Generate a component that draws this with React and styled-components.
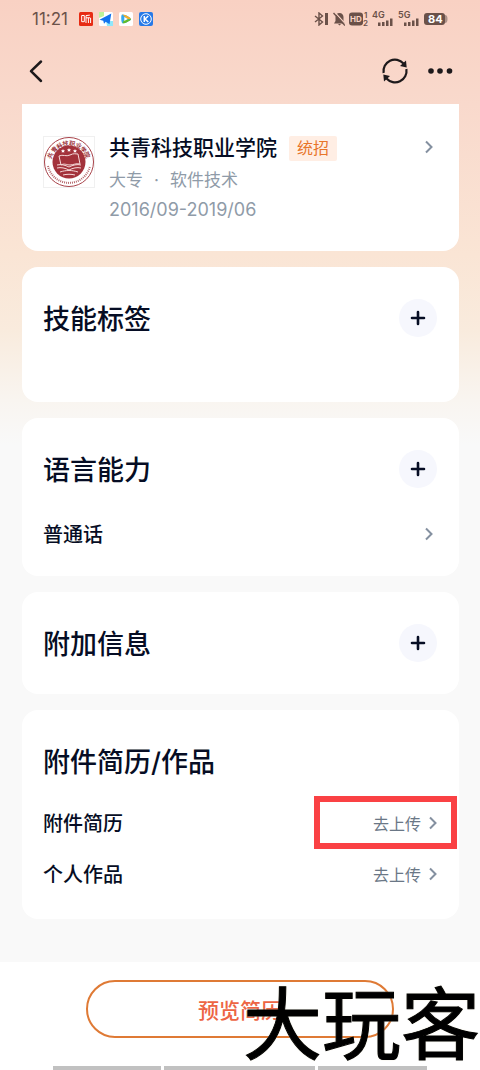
import React from "react";
import styled, { createGlobalStyle } from "styled-components";

const Global = createGlobalStyle`
  * { box-sizing: border-box; }
  body { margin: 0; background: #f9f9f9; }
  button { font-family: inherit; padding: 0; cursor: pointer; }
  svg { display: block; }
`;

const Page = styled.div`
  min-height: 100vh;
  display: flex;
  flex-direction: column;
  font-family: Inter, "Noto Sans CJK SC", sans-serif;
  color: #060d24;
  background: linear-gradient(#f9d1c3 0px, #f9d9cc 104px, #fae5d5 255px, #f9ebdd 330px, #f9f5f0 400px, #f9f9f9 445px);
`;

const StatusBar = styled.div`
  height: 38px;
  padding: 0 32px;
  display: flex;
  align-items: center;
  justify-content: space-between;
  color: #6b5149;
`;

const StatusGroup = styled.div`
  display: flex;
  align-items: center;
  gap: ${(p) => p.$gap}px;
`;

const Time = styled.span`
  font-size: 17px;
  line-height: 20px;
  margin-right: 5px;
`;

const NavBar = styled.nav`
  height: 66px;
  padding: 0 26px;
  display: flex;
  align-items: center;
  justify-content: space-between;
`;

const NavActions = styled.div`
  display: flex;
  align-items: center;
  gap: 17px;
`;

const IconButton = styled.button`
  border: 0;
  background: none;
  color: #1d191b;
`;

const Content = styled.main`
  padding: 0 21px 40px 22px;
  display: flex;
  flex-direction: column;
  gap: 16px;
`;

const Card = styled.section`
  background: #fff;
  border-radius: ${(p) => (p.$cut ? "0 0 16px 16px" : "16px")};
  padding: 32px 22px ${(p) => p.$bottom || 32}px 21px;
`;

const School = styled.div`
  display: flex;
  align-items: flex-start;
  gap: 14px;
`;

const SchoolInfo = styled.div`
  flex: 1;
  display: flex;
  flex-direction: column;
  color: #8f9ba8;
  font-size: 17px;
  line-height: 29px;
`;

const NameLine = styled.div`
  display: flex;
  align-items: center;
  gap: 12px;
  height: 24px;
  margin-bottom: 6px;
`;

const SchoolName = styled.h3`
  margin: 0;
  font-size: 21px;
  line-height: 24px;
  font-weight: 500;
  color: #060d24;
`;

const Tag = styled.span`
  padding: 0 8px;
  border-radius: 2px;
  background: #ffeee4;
  color: #e8752a;
  font-size: 16px;
  line-height: 25px;
`;

const Degree = styled.div`
  display: flex;
`;

const Dates = styled.div`
  font-size: 18px;
`;

const Dot = styled.span`
  width: 27px;
  text-align: center;
`;

const CardHead = styled.div`
  display: flex;
  align-items: center;
  justify-content: space-between;
`;

const Title = styled.h2`
  margin: 0;
  padding-top: 4px;
  font-size: 27px;
  line-height: 34px;
  font-weight: 500;
`;

const AddButton = styled.button`
  width: 38px;
  height: 38px;
  border: 0;
  border-radius: 50%;
  background: #f6f7fd;
  color: #060d24;
  display: grid;
  place-items: center;
`;

const Rows = styled.div`
  margin-top: ${(p) => p.$gap}px;
`;

const Row = styled.a`
  height: 51px;
  display: flex;
  align-items: center;
  justify-content: space-between;
  position: relative;
  color: inherit;
  text-decoration: none;
  font-size: 20px;
  font-weight: 500;
`;

const Action = styled.span`
  display: flex;
  align-items: center;
  gap: 8px;
  font-size: 16px;
  font-weight: 400;
  color: #6a7786;
`;

const Highlight = styled.span`
  position: absolute;
  top: -1px;
  right: -20px;
  width: 143px;
  height: 53px;
  border: 6px solid #fa4144;
`;

const ChevronBox = styled.span`
  display: flex;
  align-items: center;
  height: 22px;
  color: #8490a0;
  margin-right: ${(p) => p.$inset || 0}px;
`;

const Footer = styled.footer`
  margin-top: auto;
  position: relative;
  background: #fff;
  padding-top: 18px;
  display: flex;
  flex-direction: column;
  align-items: center;
  gap: 28px;
`;

const PreviewButton = styled.button`
  width: 64%;
  height: 58px;
  border: 2px solid #df7a35;
  border-radius: 29px;
  background: #fff;
  color: #ed6544;
  font-size: 21px;
  font-weight: 500;
`;

const SystemBar = styled.div`
  width: 78%;
  height: 4px;
  display: grid;
  grid-template-columns: 108fr 150fr 109fr;
  gap: 3px;
`;

const SystemKey = styled.span`
  background: #c1c1c1;
`;

const Watermark = styled.div`
  position: absolute;
  right: 0;
  bottom: 10px;
  font-family: "Noto Sans CJK SC", sans-serif;
  font-size: 79px;
  line-height: 80px;
  font-weight: 400;
  color: #000;
  -webkit-text-stroke: 1px #000;
  text-shadow: 0 0 2px #e5dfc0;
  white-space: nowrap;
  pointer-events: none;
`;

const Chevron = ({ inset }) => (
  <ChevronBox $inset={inset}>
    <svg width="8" height="14" viewBox="0 0 8 14" fill="none" stroke="currentColor" strokeWidth="2">
      <path d="M1 1.5 6.5 7 1 12.5" />
    </svg>
  </ChevronBox>
);

const Add = ({ label }) => (
  <AddButton aria-label={label}>
    <svg width="16" height="16" viewBox="0 0 16 16" stroke="currentColor" strokeWidth="2.6" strokeLinecap="round">
      <path d="M8 2v12M2 8h12" />
    </svg>
  </AddButton>
);

const AppIcons = () => (
  <>
    <svg width="14" height="14" viewBox="0 0 14 14">
      <rect width="14" height="14" rx="1.5" fill="#e72b13" />
      <path d="M2.7 3.5h2.6v6.2H2.7zM7 11V3.6l3.8-.5M7 5.8h4M9.4 5.8V11M11.6 5.8V11" fill="none" stroke="#fff" strokeWidth="1" />
    </svg>
    <svg width="14" height="14" viewBox="0 0 14 14">
      <rect width="14" height="14" rx="1.5" fill="#fff" />
      <path d="M0 0h5v4L0 6z" fill="#bdf29a" />
      <path d="M7 9h7v5H8z" fill="#8fe7fb" />
      <path d="M.5 7.8 12.3 1.4 10.5 12.3 6.8 9.7 5 11.8 4.3 8.7z" fill="#1373ee" />
    </svg>
    <svg width="14" height="14" viewBox="0 0 14 14">
      <rect width="14" height="14" rx="1.5" fill="#fff" />
      <path d="M3 2.5c2-.7 9 2.7 9 4.5S5 11.8 3.5 11.3 1.8 3.2 3 2.5z" fill="#35a9ee" />
      <path d="M3 2.5c2-.7 9 2.7 9 4.5L8 7 4 3z" fill="#f6ad25" />
      <path d="M12 7c0 1.8-7 4.8-8.5 4.3L5 8z" fill="#62bd28" />
      <path d="M5.3 5 8.7 7 5.3 9z" fill="#fff" />
    </svg>
    <svg width="14" height="14" viewBox="0 0 14 14">
      <rect width="14" height="14" rx="2" fill="#2679e8" />
      <circle cx="7" cy="7" r="5.3" fill="none" stroke="#fff" strokeWidth="1" />
      <path d="M5.3 4v6M9.3 4 6 7l3.3 3" fill="none" stroke="#fff" strokeWidth="1.5" />
    </svg>
  </>
);

const IconText = styled.text`
  font-family: Inter, sans-serif;
  font-weight: ${(p) => p.$weight || 600};
  font-size: ${(p) => p.$size}px;
`;

const Signal = ({ label }) => (
  <svg width="22" height="16" viewBox="0 0 22 16" fill="currentColor">
    <IconText $size={9} x="0" y="7">{label}</IconText>
    <path d="M6 11.500h2.500V15H6zM10 11h2.500v4H10zM14 9.500h2.500V15H14zM18 7.500h2.500V15H18z" />
  </svg>
);

const Crest = () => (
  <svg width="52" height="52" viewBox="0 0 52 52" role="img" aria-label="共青科技职业学院">
    <rect x=".5" y=".5" width="51" height="51" fill="#fff" stroke="#f0f0f0" />
    <circle cx="26" cy="26" r="24.5" fill="none" stroke="#a8434a" strokeWidth="1" />
    <defs>
      <path id="crestTop" d="M8 27a18 18 0 0 1 36 0" />
    </defs>
    <IconText $size={6} fill="#9c333b">
      <textPath href="#crestTop" startOffset="50%" textAnchor="middle">共青科技职业学院</textPath>
    </IconText>
    <path d="M5 30a21.500 21.500 0 0 0 42 0" fill="none" stroke="#b4686c" strokeWidth="2" strokeDasharray="1 1" />
    <circle cx="26" cy="26" r="16.5" fill="#a3323b" />
    <g fill="#fff">
      <path d="m20 13 .6 1.300 1.400.1-1 1 .3 1.400-1.300-.7-1.300.7.3-1.400-1-1 1.400-.1zM26 12l.6 1.300 1.400.1-1 1 .3 1.400-1.300-.7-1.300.7.3-1.400-1-1 1.400-.1zM32 13l.6 1.300 1.400.1-1 1 .3 1.400-1.300-.7-1.300.7.3-1.400-1-1 1.400-.1z" />
    </g>
    <g fill="none" stroke="#f6dada" strokeWidth="1">
      <path d="M16 20c4-2 7 1 11-1s5-1 8-1l2 10c-4-1-7 1-10 1s-6-2-9 0z" />
      <path d="M14 29c4-1 8 0 12 2 4-2 8-3 12-2M14 32c4-1 8 0 12 2 4-2 8-3 12-2M17 36c6-2 12-2 18 0M20 39c4-1 8-1 12 0" />
    </g>
  </svg>
);

export default function App() {
  return (
    <Page>
      <Global />
      <StatusBar>
        <StatusGroup $gap={6}>
          <Time>11:21</Time>
          <AppIcons />
        </StatusGroup>
        <StatusGroup $gap={4}>
          <svg width="15" height="14" viewBox="0 0 15 14" fill="none" stroke="currentColor" strokeWidth="1.4">
            <path d="m1 4 7.500 6L5 13V1l3.500 3L1 10" />
            <path d="M12.500 1v12" strokeWidth="3" />
          </svg>
          <svg width="12" height="14" viewBox="0 0 12 14">
            <path d="M6.500 1C4 1 2.500 3 2.500 5v4L1 11.500h11L10.500 9V5c0-2-1.500-4-4-4zM5 12h3l-1.500 1.500z" fill="currentColor" />
            <path d="M1.500 0 13 12.500" stroke="#f9d3c5" strokeWidth="1.2" />
            <path d="M.5 1 12 13.500" stroke="currentColor" strokeWidth="1.4" />
          </svg>
          <svg width="19" height="16" viewBox="0 0 19 16" fill="currentColor">
            <rect y="1.5" width="14" height="13" rx="3" />
            <IconText $size={8} $weight={700} x="1" y="11" fill="#f9d3c5">HD</IconText>
            <IconText $size={8} x="15" y="7">1</IconText>
            <IconText $size={8} x="14" y="15">2</IconText>
          </svg>
          <Signal label="4G" />
          <Signal label="5G" />
          <svg width="24" height="14" viewBox="0 0 24 14">
            <rect y="1" width="21" height="12" rx="3" fill="currentColor" />
            <path d="M21 3c2 0 2.500 2 2.500 4S23 11 21 11z" fill="#ad9289" />
            <IconText $size={11} $weight={700} x="4" y="11" fill="#fff">84</IconText>
          </svg>
        </StatusGroup>
      </StatusBar>

      <NavBar>
        <IconButton aria-label="返回">
          <svg width="20" height="24" viewBox="0 0 20 24" fill="none" stroke="currentColor" strokeWidth="2.5" strokeLinecap="round" strokeLinejoin="round">
            <path d="M15 2.500 5 12.200 15 22" />
          </svg>
        </IconButton>
        <NavActions>
          <IconButton aria-label="刷新">
            <svg width="28" height="28" viewBox="0 0 28 28" fill="none" stroke="currentColor" strokeWidth="2.2">
              <path d="M2.600 16A11.500 11.500 0 0 1 22.500 6.500M25.400 12A11.500 11.500 0 0 1 5.500 21.500" />
              <path d="m25 3.500.700 7L19 9zM3 24.500l-.7-7L9 19z" fill="currentColor" stroke="none" />
            </svg>
          </IconButton>
          <IconButton aria-label="更多">
            <svg width="28" height="8" viewBox="0 0 28 8" fill="currentColor">
              <circle cx="5" cy="4" r="2.8" />
              <circle cx="14" cy="4" r="2.8" />
              <circle cx="23.5" cy="4" r="2.8" />
            </svg>
          </IconButton>
        </NavActions>
      </NavBar>

      <Content>
        <Card $cut $bottom={27}>
          <School>
            <Crest />
            <SchoolInfo>
              <NameLine>
                <SchoolName>共青科技职业学院</SchoolName>
                <Tag>统招</Tag>
              </NameLine>
              <Degree>
                大专<Dot>·</Dot>软件技术
              </Degree>
              <Dates>2016/09-2019/06</Dates>
            </SchoolInfo>
            <Chevron inset={4} />
          </School>
        </Card>

        <Card $bottom={65}>
          <CardHead>
            <Title>技能标签</Title>
            <Add label="添加技能标签" />
          </CardHead>
        </Card>

        <Card $bottom={17}>
          <CardHead>
            <Title>语言能力</Title>
            <Add label="添加语言能力" />
          </CardHead>
          <Rows $gap={20}>
            <Row href="#language">
              普通话
              <Chevron inset={4} />
            </Row>
          </Rows>
        </Card>

        <Card>
          <CardHead>
            <Title>附加信息</Title>
            <Add label="添加附加信息" />
          </CardHead>
        </Card>

        <Card $bottom={20}>
          <CardHead>
            <Title>附件简历/作品</Title>
          </CardHead>
          <Rows $gap={17}>
            <Row href="#resume">
              附件简历
              <Action>
                去上传
                <Chevron />
              </Action>
              <Highlight />
            </Row>
            <Row href="#works">
              个人作品
              <Action>
                去上传
                <Chevron />
              </Action>
            </Row>
          </Rows>
        </Card>
      </Content>

      <Footer>
        <PreviewButton>预览简历</PreviewButton>
        <SystemBar>
          <SystemKey />
          <SystemKey />
          <SystemKey />
        </SystemBar>
        <Watermark>大玩客</Watermark>
      </Footer>
    </Page>
  );
}
